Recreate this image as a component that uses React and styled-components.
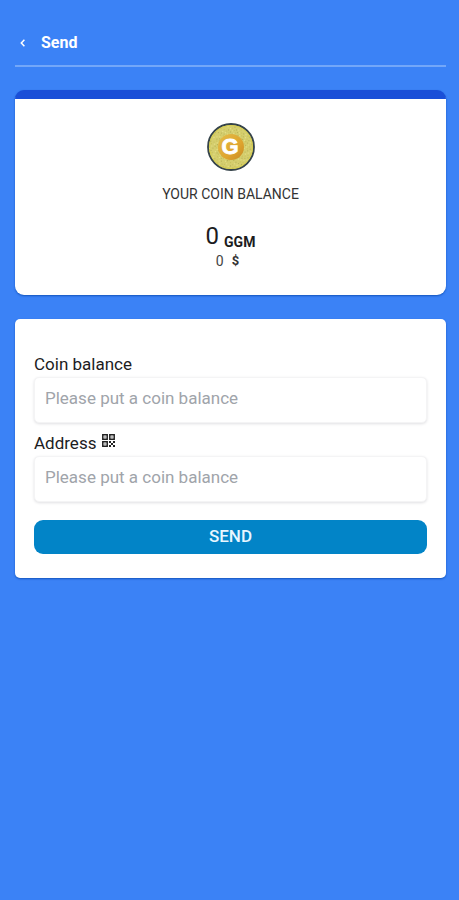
import React from "react";
import styled, { createGlobalStyle } from "styled-components";

const GlobalStyle = createGlobalStyle`
  *, *::before, *::after { box-sizing: border-box; }
  body {
    margin: 0;
    background: #3b82f6;
    color: #1c1c1e;
    font-family: Roboto, "Liberation Sans", sans-serif;
  }
`;

const Page = styled.main`
  min-height: 100vh;
  padding: 20px 13px 24px 15px;
`;

const Header = styled.header`
  display: flex;
  align-items: center;
  gap: 10px;
  height: 47px;
  border-bottom: 2px solid #73a7f9;
`;

const BackButton = styled.button`
  display: flex;
  align-items: center;
  justify-content: center;
  width: 16px;
  height: 24px;
  padding: 0;
  border: 0;
  background: none;
  color: #fff;
  cursor: pointer;
`;

const Title = styled.h1`
  margin: 0;
  color: #fff;
  font-size: 16px;
  line-height: 24px;
  font-weight: 700;
`;

const Card = styled.section`
  background: #fff;
  border-radius: 5px;
  box-shadow: 0 1px 2px #1355bd;
`;

const BalanceCard = styled(Card)`
  display: flex;
  flex-direction: column;
  align-items: center;
  margin-top: 23px;
  padding: 24px 20px;
  border-top: 9px solid #1a4fd8;
  border-radius: 9px;
`;

const Caption = styled.h2`
  margin: 13px 0 0;
  font-size: 14px;
  line-height: 20px;
  font-weight: 400;
  color: #333;
`;

const Amount = styled.p`
  display: flex;
  align-items: flex-end;
  gap: 5px;
  margin: 17px 0 0;
  font-size: 24px;
  line-height: 30px;
`;

const Unit = styled.span`
  font-size: 14px;
  line-height: 18px;
  font-weight: 700;
`;

const Fiat = styled.p`
  display: flex;
  gap: 8px;
  margin: 0 6px 0 0;
  font-size: 14px;
  line-height: 20px;
  color: #444;
`;

const Currency = styled.span`
  font-size: 13px;
  font-weight: 700;
  color: #333;
`;

const FormCard = styled(Card)`
  margin-top: 24px;
  padding: 32px 19px 24px;
`;

const Form = styled.form`
  display: flex;
  flex-direction: column;
`;

const Field = styled.div`
  display: flex;
  flex-direction: column;
  margin-bottom: 7px;
`;

const LabelRow = styled.div`
  display: flex;
  align-items: flex-start;
  gap: 6px;
  height: 26px;
`;

const Label = styled.label`
  font-size: 17px;
  line-height: 26px;
`;

const ScanButton = styled.button`
  display: flex;
  padding: 4px 0;
  border: 0;
  background: none;
  color: #222;
  cursor: pointer;
`;

const Input = styled.input`
  width: 100%;
  height: 46px;
  padding: 0 10px 4px;
  border: 1px solid #f4f4f5;
  border-radius: 5px;
  background: #fff;
  box-shadow: 0 1px 3px #e0e0e3;
  color: #1c1c1e;
  font-family: inherit;
  font-size: 17px;
  outline: none;

  &::placeholder {
    color: #a0a4aa;
    opacity: 1;
  }
`;

const SubmitButton = styled.button`
  height: 34px;
  margin-top: 11px;
  padding: 0 0 2px;
  border: 0;
  border-radius: 9px;
  background: #0284c7;
  color: #e8f6ff;
  font-family: inherit;
  font-size: 17px;
  font-weight: 500;
  line-height: 24px;
  cursor: pointer;
`;

const CoinText = styled.text`
  font-family: "Liberation Sans", Arial, sans-serif;
  font-size: 22px;
  font-weight: 700;
`;

function ChevronIcon() {
  return (
    <svg width="16" height="16" viewBox="0 0 16 16" fill="none" aria-hidden="true">
      <path d="M9.4 4.8 6.3 8l3.1 3.2" stroke="currentColor" strokeWidth="1.5" />
    </svg>
  );
}

const specks = Array.from({ length: 150 }, (_, i) => {
  const angle = i * 2.399;
  const radius = 12 + ((i * 37) % 100) * 0.095;
  return {
    x: 24 + Math.cos(angle) * radius,
    y: 24 + Math.sin(angle) * radius,
    color: i % 3 === 0 ? "#b5b158" : i % 3 === 1 ? "#e6e28c" : "#c8c05a",
  };
});

function Coin() {
  return (
    <svg width="48" height="48" viewBox="0 0 48 48" role="img" aria-label="GGM coin">
      <defs>
        <linearGradient id="coinCore" x1="0" y1="0" x2="1" y2="1">
          <stop offset="0" stopColor="#e3bd48" />
          <stop offset="0.6" stopColor="#dfa52f" />
          <stop offset="1" stopColor="#c98a22" />
        </linearGradient>
      </defs>
      <circle cx="24" cy="24" r="23" fill="#d5ce6e" stroke="#35434a" strokeWidth="1.8" />
      <circle cx="24" cy="24" r="21.5" fill="none" stroke="#d8cf4e" strokeWidth="1" />
      {specks.map((s, i) => (
        <circle key={i} cx={s.x} cy={s.y} r="0.6" fill={s.color} />
      ))}
      <circle cx="24" cy="24" r="13" fill="url(#coinCore)" />
      <CoinText x="23" y="31" textAnchor="middle" fill="#fff" stroke="#fff" strokeWidth="0.8">
        G
      </CoinText>
    </svg>
  );
}

function QrIcon() {
  return (
    <svg width="13" height="13" viewBox="0 0 13 13" aria-hidden="true">
      <g fill="none" stroke="currentColor" strokeWidth="1.5">
        <path d="M.8.8h4.4v4.4H.8zM7.8.8h4.4v4.4H7.8zM.8 7.8h4.4v4.4H.8z" />
      </g>
      <path
        d="M2.4 2.4h1.2v1.2H2.4zM9.4 2.4h1.2v1.2H9.4zM2.4 9.4h1.2v1.2H2.4zM7 7h2v2H7zM9 9h2v2H9zM11 7h2v2h-2zM7 11h2v2H7zM11 11h2v2h-2z"
        fill="currentColor"
      />
    </svg>
  );
}

export default function App() {
  return (
    <>
      <GlobalStyle />
      <Page>
        <Header>
          <BackButton type="button" aria-label="Back">
            <ChevronIcon />
          </BackButton>
          <Title>Send</Title>
        </Header>

        <BalanceCard>
          <Coin />
          <Caption>YOUR COIN BALANCE</Caption>
          <Amount>
            0 <Unit>GGM</Unit>
          </Amount>
          <Fiat>
            0 <Currency>$</Currency>
          </Fiat>
        </BalanceCard>

        <FormCard>
          <Form onSubmit={(event) => event.preventDefault()}>
            <Field>
              <LabelRow>
                <Label htmlFor="amount">Coin balance</Label>
              </LabelRow>
              <Input id="amount" inputMode="decimal" placeholder="Please put a coin balance" />
            </Field>
            <Field>
              <LabelRow>
                <Label htmlFor="address">Address</Label>
                <ScanButton type="button" aria-label="Scan QR code">
                  <QrIcon />
                </ScanButton>
              </LabelRow>
              <Input id="address" placeholder="Please put a coin balance" />
            </Field>
            <SubmitButton type="submit">SEND</SubmitButton>
          </Form>
        </FormCard>
      </Page>
    </>
  );
}
